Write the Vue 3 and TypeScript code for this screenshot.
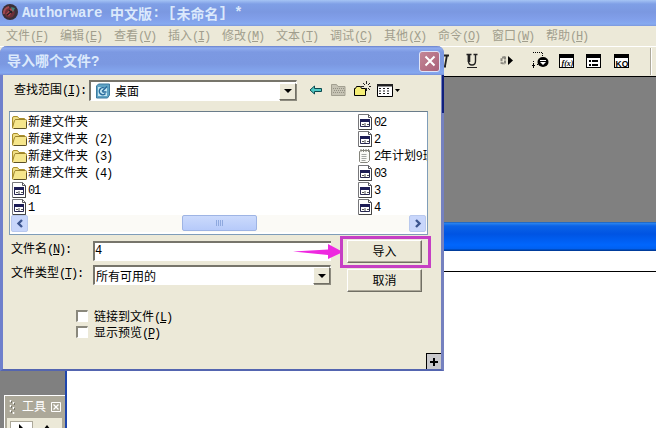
<template>
  <div class="app">
    <!-- 主窗口标题 -->
    <div class="titlebar">
      <svg class="logo" width="18" height="18" viewBox="0 0 18 18">
        <circle cx="9" cy="9" r="8" fill="#3a3038" />
        <circle cx="8.500" cy="9.500" r="5.200" fill="#6b2f38" />
        <path d="M3 11a6 6 0 0 1 5-7" fill="none" stroke="#a34a50" stroke-width="2" />
        <path d="M5 11l5-6 3 2-5 6z" fill="#b04a50" />
        <path d="M10 4l4 1-2 4z" fill="#3f8478" />
        <path d="M6 12l5-4M8 7l3 3" stroke="#252026" stroke-width="1.500" />
      </svg>
      <div class="caption">
        <span class="latin wide">Authorware&nbsp;</span>
        <span>中文版</span>
        <span class="latin colon">:</span>
        <span class="latin">[</span>
        <span>未命名</span>
        <span class="latin tail">]&nbsp;*</span>
      </div>
    </div>

    <!-- 菜单 -->
    <div class="menubar">
      <span v-for="m in menus" :key="m.key" class="menu"
        >{{ m.name }}<span class="en">(<u>{{ m.key }}</u>)</span></span
      >
    </div>

    <!-- 工具条 -->
    <div class="toolbar">
      <svg width="220" height="29" viewBox="436 47 220 29">
        <path d="M444 55.500h5M441 66.500h5M447 55l-2 11" stroke="#222" stroke-width="1.800" fill="none" />
        <path d="M466.500 54.500h5M473.500 54.500h4M475.500 55v6q0 4-3.500 4t-3.500-4v-6" fill="none" stroke="#222" stroke-width="1.400" />
        <path d="M469 54v8" stroke="#222" stroke-width="2.600" />
        <path d="M467 67.500h10" stroke="#222" />
        <path d="M505 56.500v8M505 57l-3.500 1v5l3.500 1" fill="none" stroke="#8b8980" stroke-width="2" stroke-dasharray="3 1" />
        <path d="M508 56v9l5-4.500z" fill="#000" />
        <ellipse cx="543" cy="62" rx="5.500" ry="5" fill="#000" />
        <path d="M540 62h6l-3 3z" fill="#fff" />
        <path d="M540 60.500h6" stroke="#fff" />
        <g shape-rendering="crispEdges">
          <path d="M533 52.500h9M538 64.500h-2" stroke="#000" stroke-dasharray="1 1" />
          <path d="M542.500 53v3" stroke="#000" stroke-dasharray="1 1" />
          <path d="M533.500 61v1M533.500 63v5M532 65.500h3" stroke="#000" />
          <g fill="#fff" stroke="#000">
            <path d="M559.500 55.500h14v12h-14z" />
            <path d="M586.500 55.500h14v12h-14z" />
            <path d="M614.500 55.500h14v12h-14z" />
          </g>
          <path d="M559 54h15v4h-15zM586 54h15v4h-15zM614 54h15v4h-15z" fill="#000" />
          <path d="M589 60h2v2h-2zM592 60h6v2h-6zM589 64h2v2h-2zM592 64h6v2h-6z" fill="#000" />
          <path d="M650.500 48v27" stroke="#aca899" />
          <path d="M651.500 48v27" stroke="#fff" />
        </g>
        <text x="561.500" y="65.500" class="fx">f(x)</text>
        <text x="615.500" y="66.500" class="ko">KO</text>
      </svg>
    </div>

    <div class="workspace"></div>

    <!-- 设计窗口 -->
    <div class="design">
      <div class="design-title"></div>
      <div class="design-line"></div>
    </div>

    <!-- 工具面板 -->
    <div class="tools">
      <div class="tools-head">
        <svg width="7" height="17" viewBox="0 0 7 17">
          <path d="M1.500 1v2M4.500 3v2M1.500 6v2M4.500 8v2M1.500 11v2M4.500 13v2" stroke="#fff" stroke-width="1.500" />
          <path d="M2.500 2v2M5.500 4v2M2.500 7v2M5.500 9v2M2.500 12v2" stroke="#77756a" />
        </svg>
        <span>工具</span>
        <svg width="10" height="10" viewBox="0 0 10 10">
          <path d="M.5.5h9v9h-9z" fill="none" stroke="#fff" />
          <path d="M2.500 2.500l5 5M7.500 2.500l-5 5" stroke="#fff" stroke-width="1.300" />
        </svg>
      </div>
      <div class="tools-body">
        <div class="tool on">
          <svg width="12" height="10"><path d="M3 0l9 9H8l-1 1H3z" fill="#000" /></svg>
        </div>
        <div class="tool">
          <svg width="12" height="10"><path d="M6 2l4 5v3H2V7z" fill="#000" /></svg>
        </div>
      </div>
    </div>

    <!-- 导入对话框 -->
    <div class="dialog">
      <div class="dialog-title">
        <span>导入哪个文件<span class="latin">?</span></span>
        <div class="close">
          <svg width="14" height="14" viewBox="0 0 14 14">
            <path d="M2.500 2.500l9 9M11.500 2.500l-9 9" stroke="#fff" stroke-width="2" />
          </svg>
        </div>
      </div>
      <div class="dialog-body">
        <div class="look">
          <span class="look-label">查找范围<span class="en">(<u>I</u>):</span></span>
          <div class="field look-field">
            <svg width="16" height="16" viewBox="0 0 16 16">
              <path d="M1.500 3l2-2h11v11l-2 3h-11z" fill="#5fa3c4" stroke="#3c7ba0" />
              <path d="M3 4h9v9H3z" fill="#c6e8f3" />
              <path d="M10 5.500a3.500 3.500 0 1 0 .5 5M7 8.500l5-5M7.500 9h4" fill="none" stroke="#286a9c" stroke-width="1.500" />
            </svg>
            <span>桌面</span>
            <div class="drop"><i></i></div>
          </div>
          <svg class="nav" width="92" height="20" viewBox="308 81 92 20">
            <path d="M310 91l4.500-4v2.500h7v3h-7V95z" fill="#4fc9c4" stroke="#0d4a50" />
            <path d="M331.500 96.500v-11h5l1.500 2h7v9z" fill="#c6c3b4" stroke="#a3a091" />
            <path d="M333 89.500h11M334 91.500h11M333 93.500h11" stroke="#949184" stroke-dasharray="1 1" />
            <path d="M354.500 96.500v-7h1l1-2h4l1 2h4v7z" fill="#f5ee75" stroke="#000" />
            <path d="M366.500 82v3M366.500 89v3M361 87.500h3M369 87.500h2M363 84l2 2M370 84l-2 2M368 89l2 2" stroke="#222" />
            <path d="M377.500 85.500h15v12h-15z" fill="#fff" stroke="#000" />
            <path d="M377 85h16v2.500h-16z" fill="#222" />
            <path d="M379 89.500h12M379 92h12M379 94.500h12" stroke="#222" stroke-dasharray="2 2" />
            <path d="M395 90h5l-2.500 3z" fill="#000" />
          </svg>
        </div>

        <div class="list">
          <div class="cols">
            <div v-for="(col, c) in columns" :key="c" class="col">
              <div v-for="(f, i) in col" :key="i" class="row">
                <svg v-if="f.type === 'folder'" width="16" height="16" viewBox="0 0 16 16">
                  <path d="M1.500 14V4q0-1.500 1.500-1.500h3.500L8 4.500h5.500V7" fill="#f0df86" stroke="#a98e2b" />
                  <path d="M1.500 13.500l2-7q.3-1 1.500-1h9.500q1 0 1 1v7q0 1-1 1h-12q-1 0-1-1z" fill="#f6e68c" stroke="#9c832c" />
                  <path d="M3 14.500h11.500q1 0 1-1V8" fill="none" stroke="#5b5028" />
                </svg>
                <svg v-else-if="f.type === 'text'" width="16" height="16" viewBox="0 0 16 16">
                  <path d="M2.500 3.500l1-1h9v10l-2 2h-7l-1-1z" fill="#fbfbf7" stroke="#85857c" />
                  <path d="M4 1v3M6.500 1v3M9 1v3M11.500 1v3" stroke="#85857c" />
                  <path d="M4.500 6.500h5M4.500 8.500h5M4.500 10.500h5M4.500 12.500h4" stroke="#a4a7a3" />
                </svg>
                <svg v-else width="16" height="16" viewBox="0 0 16 16">
                  <path d="M1.500.5h10l3 3v12h-13z" fill="#fff" stroke="#77777a" />
                  <path d="M11.500.5v3h3" fill="none" stroke="#55555c" />
                  <path d="M14.500 4v11.500H2" fill="none" stroke="#444" />
                  <path d="M3.500 5.500h9v7h-9z" fill="#fff" stroke="#26264f" />
                  <path d="M3 5h10v3H3z" fill="#1d1d56" />
                  <path d="M5 10.500h2M8 9v3M10 10.500h2" stroke="#555" />
                </svg>
                <span class="fname">{{ f.name }}<span v-if="f.num" class="en">{{ f.num }}</span><template v-if="f.rest">{{ f.rest }}</template></span>
              </div>
            </div>
          </div>
          <div class="scroll">
            <div class="arrow">
              <svg width="8" height="9"><path d="M6 1L2.500 4.500 6 8" fill="none" stroke="#3c5590" stroke-width="2.400" /></svg>
            </div>
            <div class="track">
              <div class="thumb"><i v-for="n in 4" :key="n"></i></div>
            </div>
            <div class="arrow">
              <svg width="8" height="9"><path d="M2 1l3.500 3.500L2 8" fill="none" stroke="#3c5590" stroke-width="2.400" /></svg>
            </div>
          </div>
        </div>

        <div class="form">
          <div class="fields">
            <div class="line">
              <span class="label">文件名<span class="en">(<u>N</u>):</span></span>
              <div class="field name"><span class="en">4</span></div>
            </div>
            <div class="line">
              <span class="label">文件类型<span class="en">(<u>T</u>):</span></span>
              <div class="field type">
                <span>所有可用的</span>
                <div class="drop"><i></i></div>
              </div>
            </div>
          </div>
          <div class="buttons">
            <div class="btn">导入</div>
            <div class="btn">取消</div>
          </div>
        </div>

        <div class="checks">
          <div v-for="c in checks" :key="c.key" class="check">
            <i class="box"></i>
            <span>{{ c.name }}<span class="en">(<u>{{ c.key }}</u>)</span></span>
          </div>
        </div>
      </div>
      <div class="edge"></div>
      <div class="plus">
        <svg width="10" height="10"><path d="M5 1v8M1 5h8" stroke="#000" stroke-width="2" /></svg>
      </div>
    </div>

    <!-- 标注：箭头和粉框 -->
    <svg class="pointer" width="50" height="18" viewBox="0 0 50 18">
      <path d="M0 8.500l35-2V1l15 8-15 7v-4z" fill="#ee28e0" />
    </svg>
    <div class="mark"></div>
  </div>
</template>

<script setup lang="ts">
interface FileItem {
  type: 'folder' | 'text' | 'app'
  name: string
  num?: string
  rest?: string
}

const menus = [
  { name: '文件', key: 'F' },
  { name: '编辑', key: 'E' },
  { name: '查看', key: 'V' },
  { name: '插入', key: 'I' },
  { name: '修改', key: 'M' },
  { name: '文本', key: 'T' },
  { name: '调试', key: 'C' },
  { name: '其他', key: 'X' },
  { name: '命令', key: 'O' },
  { name: '窗口', key: 'W' },
  { name: '帮助', key: 'H' }
]

const columns: FileItem[][] = [
  [
    { type: 'folder', name: '新建文件夹' },
    { type: 'folder', name: '新建文件夹', num: ' (2)' },
    { type: 'folder', name: '新建文件夹', num: ' (3)' },
    { type: 'folder', name: '新建文件夹', num: ' (4)' },
    { type: 'app', name: '', num: '01' },
    { type: 'app', name: '', num: '1' }
  ],
  [
    { type: 'app', name: '', num: '02' },
    { type: 'app', name: '', num: '2' },
    { type: 'text', name: '', num: '2', rest: '年计划9班' },
    { type: 'app', name: '', num: '03' },
    { type: 'app', name: '', num: '3' },
    { type: 'app', name: '', num: '4' }
  ]
]

const checks = [
  { name: '链接到文件', key: 'L' },
  { name: '显示预览', key: 'P' }
]
</script>

<style>
body {
  margin: 0;
  overflow: hidden;
}
</style>

<style scoped>
.app {
  position: relative;
  width: 656px;
  height: 428px;
  overflow: hidden;
  display: flex;
  flex-direction: column;
  background: #808080;
  color: #000;
  font: 12px/16px 'Noto Sans CJK SC', sans-serif;
  white-space: pre;
}

.app * {
  box-sizing: border-box;
}

svg {
  display: block;
  flex: none;
}

/* 半角字符占 6px */
.en {
  font-family: 'Liberation Mono', monospace;
  font-size: 12px;
  line-height: 1;
  letter-spacing: -1.2px;
}

u {
  text-decoration: underline;
  text-underline-offset: 1px;
}

.latin {
  font-family: 'Liberation Mono', monospace;
}

.titlebar {
  height: 26px;
  display: flex;
  align-items: center;
  padding-left: 1px;
  background: linear-gradient(#a5c4f4 0, #7f9fe6 4px, #7b98e1 12px, #819fea 19px, #86aaf0 24px, #7d98dc 26px);
}

.logo {
  margin-top: -3px;
}

.caption {
  display: flex;
  margin-left: 3px;
  color: #dbe9fc;
  font-size: 14px;
  font-weight: bold;
  line-height: 20px;
}

.caption .latin {
  font-size: 14px;
}

.caption .wide {
  letter-spacing: -0.4px;
}

.caption .colon {
  width: 16px;
}

.caption .tail {
  letter-spacing: -0.5px;
}

.menubar {
  height: 20px;
  flex: none;
  display: flex;
  gap: 12px;
  padding: 1px 0 0 6px;
  background: #ece9d8;
  color: #a19e8d;
}

.menu {
  width: 42px;
}

.toolbar {
  height: 31px;
  flex: none;
  display: flex;
  justify-content: flex-end;
  background: #ece9d8;
  border-top: 1px solid #fff;
  border-bottom: 1px solid #000;
}

.fx {
  font: italic bold 8px 'Liberation Serif', serif;
}

.ko {
  font: bold 8.5px 'Liberation Sans', sans-serif;
}

.workspace {
  flex: 1;
}

.design {
  position: absolute;
  left: 65px;
  top: 222px;
  width: 600px;
  height: 210px;
  background: #fff;
  border-left: 2px solid #1d45ad;
}

.design-title {
  height: 29px;
  background: linear-gradient(#17509e 0, #2d86f0 1px, #0b62e6 4px, #0054e3 12px, #0066fd 23px, #0060f0 27px, #003c9c 28px);
}

.design-line {
  height: 21px;
  border-bottom: 1px solid #000;
}

.tools {
  position: absolute;
  left: 4px;
  top: 395px;
  width: 61px;
  height: 40px;
  background: #aca899;
  border: 1px solid #fff;
  border-right-width: 0;
}

.tools-head {
  height: 22px;
  display: flex;
  align-items: center;
  padding-left: 4px;
  color: #fff;
}

.tools-head span {
  margin: -2px 5px 0 6px;
}

.tools-body {
  display: flex;
  margin: 0 3px 0 2px;
  padding: 3px;
  gap: 3px;
  background: #ece9d8;
}

.tool {
  width: 24px;
  height: 20px;
  padding: 2px 0 0 5px;
}

.tool.on {
  background: #fff;
  border: 1px solid #aca899;
}

/* 对话框 */
.dialog {
  position: absolute;
  left: 0;
  top: 46px;
  width: 444px;
  height: 325px;
  display: flex;
  flex-direction: column;
  background: #ece9d8;
  border: 3px solid #6f80cc;
  border-top: 0;
  border-right-color: #7581bf;
  border-bottom: 2px solid #5465b0;
  border-radius: 7px 7px 0 0;
}

.dialog-title {
  height: 29px;
  flex: none;
  display: flex;
  align-items: center;
  justify-content: space-between;
  margin: 0 -3px;
  padding: 1px 4px 0 7px;
  border-radius: 7px 7px 0 0;
  background: linear-gradient(#6880cc 0, #91adef 2px, #7c99e2 6px, #7b98e1 18px, #85a8f0 27px, #7791d8 29px);
  color: #dbe9fc;
  font-size: 14px;
  font-weight: bold;
}

.close {
  width: 21px;
  height: 21px;
  display: flex;
  align-items: center;
  justify-content: center;
  border: 1px solid #dfe4f8;
  border-radius: 3px;
  background: linear-gradient(135deg, #c48796, #a96079);
}

.dialog-body {
  padding-left: 6px;
}

.look {
  display: flex;
  height: 21px;
  margin-top: 5px;
}

.look-label {
  width: 80px;
  padding: 1px 0 0 5px;
}

.field {
  display: flex;
  align-items: center;
  background: #fff;
  border: 1px solid #fff;
  border-top: 2px solid #77756b;
  border-left: 2px solid #77756b;
}

.look-field {
  width: 208px;
  padding-left: 4px;
}

.look-field span {
  margin: -1px 0 0 4px;
}

.drop {
  width: 17px;
  height: 17px;
  display: flex;
  align-items: center;
  justify-content: center;
  margin-left: auto;
  background: #ece9d8;
  border: 1px solid #fff;
  border-right-color: #716f64;
  border-bottom-color: #716f64;
  box-shadow: 1px 1px 0 #8d8b7f;
}

.drop i {
  border: 4px solid transparent;
  border-top-color: #000;
  border-bottom: 0;
}

.nav {
  margin-left: 11px;
}

.list {
  width: 419px;
  height: 124px;
  margin-top: 10px;
  display: flex;
  flex-direction: column;
  background: #fff;
  border: 1px solid #7f9db9;
  border-top-color: #6a7c8a;
  overflow: hidden;
}

.cols {
  height: 103px;
  flex: none;
  display: flex;
  padding: 1px 0 0 1px;
}

.col {
  width: 346px;
  flex: none;
}

.row {
  height: 17px;
  display: flex;
  align-items: center;
}

.fname {
  height: 17px;
  margin-left: 1px;
  line-height: 16px;
}

.scroll {
  display: flex;
  height: 17px;
  padding: 0 1px;
  background: #fbfaf6;
}

.arrow {
  width: 17px;
  height: 17px;
  display: flex;
  align-items: center;
  justify-content: center;
  border: 1px solid #b9c9ee;
  border-radius: 2px;
  background: #c8d6fb;
}

.track {
  flex: 1;
}

.thumb {
  width: 75px;
  height: 16px;
  display: flex;
  align-items: center;
  justify-content: center;
  gap: 1px;
  margin-left: 154px;
  border: 1px solid #9eb4e4;
  border-radius: 2px;
  background: linear-gradient(#cbdafc, #b6cafa);
}

.thumb i {
  width: 1px;
  height: 6px;
  background: #8fa9df;
}

.form {
  display: flex;
  margin-top: 5px;
}

.fields {
  width: 338px;
}

.line {
  display: flex;
  justify-content: space-between;
  height: 24px;
  padding: 1px 16px 0 2px;
}

.label {
  margin-top: -1px;
}

.line .field {
  width: 238px;
  height: 20px;
  flex: none;
}

.field.name {
  border-right: 0;
}

.field.name .en {
  margin-top: -1px;
}

.field.type {
  padding-left: 1px;
}

.buttons {
  display: flex;
  flex-direction: column;
  gap: 6px;
}

.btn {
  width: 75px;
  height: 23px;
  line-height: 20px;
  text-align: center;
  background: #ece9d8;
  border: 1px solid #fff;
  border-right: 1px solid #716f64;
  border-bottom: 1px solid #716f64;
  box-shadow: inset -1px -1px 0 #aca899;
}

.checks {
  margin: 16px 0 0 67px;
}

.check {
  height: 16px;
  display: flex;
  align-items: center;
}

.box {
  width: 12px;
  height: 12px;
  margin-right: 6px;
  background: #fff;
  border: 1px solid #fff;
  border-top: 2px solid #8a887c;
  border-left: 2px solid #8a887c;
}

.edge {
  position: absolute;
  right: -3px;
  top: 29px;
  width: 2px;
  height: 38px;
  background: #10207c;
}

.plus {
  position: absolute;
  right: 0;
  bottom: 0;
  width: 15px;
  height: 16px;
  display: flex;
  align-items: center;
  justify-content: center;
  background: #c9c9cc;
  border-top: 1px solid #000;
  border-left: 1px solid #000;
}

.pointer {
  position: absolute;
  left: 293px;
  top: 243px;
}

.mark {
  position: absolute;
  left: 340px;
  top: 236px;
  width: 91px;
  height: 32px;
  border: 3px solid #c63fc4;
}
</style>
